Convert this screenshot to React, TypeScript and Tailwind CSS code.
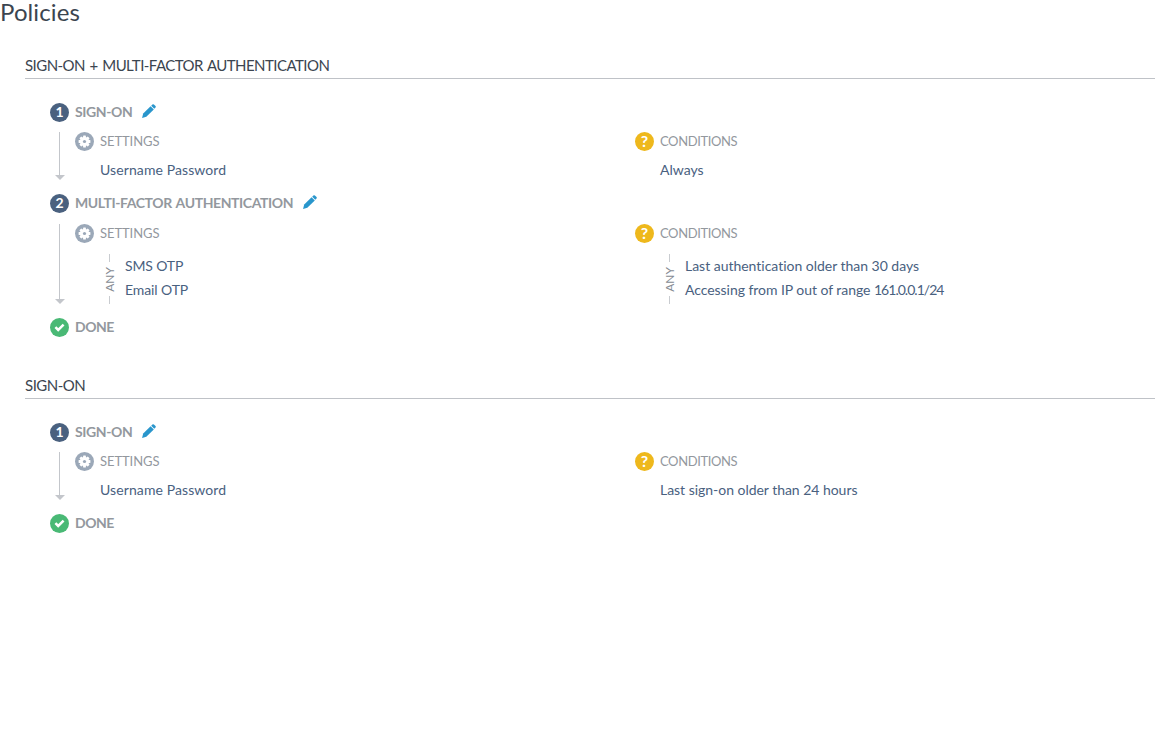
import type { ReactNode } from "react";

type Entry = { text: string; tracking: string; address?: string };

function PencilIcon() {
  return (
    <svg className="size-[14px] shrink-0" viewBox="0 0 14 14" fill="#2996cc">
      <path d="M10.4.5a1.1 1.1 0 0 1 1.5 0l1.6 1.6a1.1 1.1 0 0 1 0 1.5l-1.2 1.2-3.1-3.1z" />
      <path d="M8.6 2.2l3.2 3.2-7.5 7.4L.1 13.9l1.1-4.3z" />
    </svg>
  );
}

function GearIcon() {
  return (
    <svg className="size-[19px] shrink-0" viewBox="0 0 19 19">
      <circle cx="9.5" cy="9.5" r="9.5" fill="#9ba8b8" />
      <g fill="#fff">
        {[0, 45, 90, 135].map((a) => (
          <rect key={a} x="8.1" y="3.6" width="2.8" height="11.8" rx=".5" transform={`rotate(${a} 9.5 9.5)`} />
        ))}
        <circle cx="9.5" cy="9.5" r="4.6" />
      </g>
      <circle cx="9.5" cy="9.5" r="1.6" fill="#9ba8b8" />
    </svg>
  );
}

function CheckIcon() {
  return (
    <svg className="size-[19px] shrink-0" viewBox="0 0 19 19">
      <circle cx="9.5" cy="9.5" r="9.5" fill="#49b975" />
      <path d="M5.4 9.1l2.8 2.8 5.4-5.3" fill="none" stroke="#fff" strokeWidth="2.5" />
    </svg>
  );
}

function Badge({ color, children }: { color: string; children: ReactNode }) {
  return (
    <span className={`flex size-[19px] shrink-0 items-center justify-center rounded-full leading-none font-bold text-white ${color}`}>
      {children}
    </span>
  );
}

function Arrow() {
  return (
    <div className="flex w-[19px] shrink-0 flex-col items-center">
      <div className="w-px flex-1 bg-[#c3c6cb]" />
      <div className="ml-px h-0 w-0 border-x-[5px] border-t-[5px] border-x-transparent border-t-[#c3c6cb]" />
    </div>
  );
}

function Entries({ entries }: { entries: Entry[] }) {
  if (entries.length === 1) {
    return (
      <div className={`mt-[9px] mb-px ml-[25px] h-[19px] text-[14px] leading-[19px] text-[#49617f] ${entries[0].tracking}`}>
        {entries[0].text}
      </div>
    );
  }
  return (
    <div className="mt-[11px] ml-[25px] flex h-[50px]">
      <div className="flex w-[19px] flex-col items-center justify-between">
        <div className="h-2 w-px bg-[#c9ccd0]" />
        <div className="ml-px rotate-180 text-[12px] leading-3 text-[#858b93] [writing-mode:vertical-rl]">ANY</div>
        <div className="h-2 w-px bg-[#c9ccd0]" />
      </div>
      <div className="ml-[6px] text-[14px] leading-6 text-[#49617f]">
        {entries.map((e) => (
          <div key={e.text} className={e.tracking}>
            {e.text}
            {e.address && <> <span className="tracking-[-0.98px]">{e.address}</span></>}
          </div>
        ))}
      </div>
    </div>
  );
}

function Step({ n, title, tracking, gap, settings, conditions }: {
  n: number; title: string; tracking: string; gap: string; settings: Entry[]; conditions: Entry[];
}) {
  return (
    <div className="mb-[14px]">
      <div className="flex h-[19px] items-center">
        <Badge color="bg-[#4a617f] text-[14px] pb-px">{n}</Badge>
        <span className={`mr-[10px] mb-[2px] ml-[6px] text-[14px] leading-[19px] font-bold text-[#93989e] ${tracking}`}>{title}</span>
        <span className="mb-[3px]"><PencilIcon /></span>
      </div>
      <div className={`flex ${gap}`}>
        <Arrow />
        <div className="ml-[6px] w-[560px]">
          <div className="flex h-[19px] items-center gap-[6px]">
            <GearIcon />
            <span className="text-[13px] tracking-[-0.08px] text-[#93989e]">SETTINGS</span>
          </div>
          <Entries entries={settings} />
        </div>
        <div>
          <div className="flex h-[19px] items-center gap-[6px]">
            <Badge color="bg-[#eeb81c] text-[16px] pb-px">?</Badge>
            <span className="text-[13px] tracking-[-0.38px] text-[#93989e]">CONDITIONS</span>
          </div>
          <Entries entries={conditions} />
        </div>
      </div>
    </div>
  );
}

function Policy({ title, tracking, children }: { title: string; tracking: string; children: ReactNode }) {
  return (
    <section className="mb-[38px] pl-[25px]">
      <h2 className={`mb-6 h-6 border-b border-[#bfc2c7] text-[15px] leading-[20px] text-[#3b4550] ${tracking}`}>{title}</h2>
      <div className="pl-[25px]">
        {children}
        <div className="flex h-[19px] items-center gap-[6px]">
          <CheckIcon />
          <span className="mb-[2px] text-[14px] leading-[19px] font-bold tracking-[-0.5px] text-[#93989e]">DONE</span>
        </div>
      </div>
    </section>
  );
}

export default function App() {
  return (
    <main className="min-h-[749px] overflow-x-hidden bg-white font-['Lato',sans-serif] whitespace-nowrap [font-variant-ligatures:none]">
      <h1 className="mb-[31px] h-[24px] text-[24px] leading-[24px] tracking-[0.1px] text-[#3b4550]">Policies</h1>
      <Policy title="SIGN-ON + MULTI-FACTOR AUTHENTICATION" tracking="tracking-[-0.55px] [word-spacing:1.3px]">
        <Step
          n={1} title="SIGN-ON" tracking="tracking-[-0.4px]" gap="mt-[10px]"
          settings={[{ text: "Username Password", tracking: "tracking-[0.1px]" }]}
          conditions={[{ text: "Always", tracking: "tracking-[0px]" }]}
        />
        <Step
          n={2} title="MULTI-FACTOR AUTHENTICATION" tracking="tracking-[-0.4px] [word-spacing:1.3px]" gap="mt-[11px]"
          settings={[
            { text: "SMS OTP", tracking: "tracking-[-0.15px]" },
            { text: "Email OTP", tracking: "tracking-[-0.1px]" },
          ]}
          conditions={[
            { text: "Last authentication older than 30 days", tracking: "tracking-[-0.02px]" },
            { text: "Accessing from IP out of range", address: "161.0.0.1/24", tracking: "tracking-[-0.05px]" },
          ]}
        />
      </Policy>
      <Policy title="SIGN-ON" tracking="tracking-[-0.5px]">
        <Step
          n={1} title="SIGN-ON" tracking="tracking-[-0.4px]" gap="mt-[10px]"
          settings={[{ text: "Username Password", tracking: "tracking-[0.1px]" }]}
          conditions={[{ text: "Last sign-on older than 24 hours", tracking: "tracking-[-0.03px]" }]}
        />
      </Policy>
    </main>
  );
}
